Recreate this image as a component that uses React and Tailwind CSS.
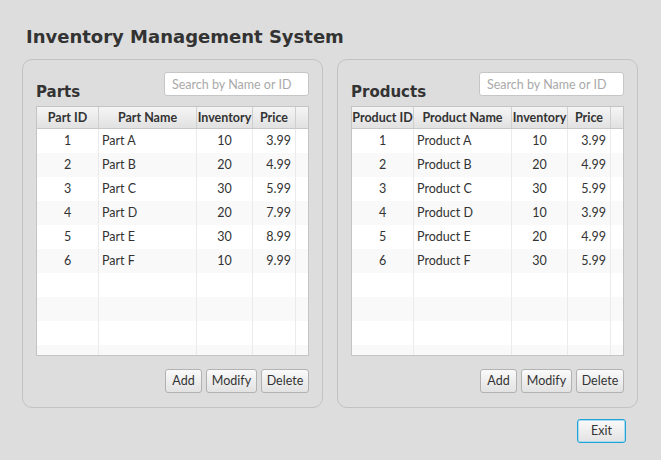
import React from "react";

const PARTS = [
  [1, "Part A", 10, "3.99"],
  [2, "Part B", 20, "4.99"],
  [3, "Part C", 30, "5.99"],
  [4, "Part D", 20, "7.99"],
  [5, "Part E", 30, "8.99"],
  [6, "Part F", 10, "9.99"],
];

const PRODUCTS = [
  [1, "Product A", 10, "3.99"],
  [2, "Product B", 20, "4.99"],
  [3, "Product C", 30, "5.99"],
  [4, "Product D", 10, "3.99"],
  [5, "Product E", 20, "4.99"],
  [6, "Product F", 30, "5.99"],
];

const UI = { fontFamily: 'Lato, "Open Sans", sans-serif' };
const HEAD = { fontFamily: '"DejaVu Sans", Verdana, sans-serif' };

function Btn({ children, w, focused }) {
  return (
    <button
      type="button"
      className={`${w} h-[24px] rounded-[3px] text-[12.5px] leading-none text-[#333] bg-gradient-to-b from-[#fafafa] to-[#e2e2e2] border ${
        focused ? "border-[#1fa3d6] shadow-[inset_0_0_0_1px_#a8dbf0]" : "border-[#b2b2b2]"
      }`}
    >
      {children}
    </button>
  );
}

function Table({ labels, rows }) {
  const cols = ["w-[62px]", "w-[98px]", "w-[56px]", "w-[43px]"];
  const empty = Array.from({ length: 10 - rows.length }, () => null);
  return (
    <div className="h-[250px] border border-[#c4c4c4] bg-white overflow-hidden">
      <div className="flex h-[22px] bg-gradient-to-b from-[#f5f5f5] to-[#e1e1e1] border-b border-[#c8c8c8]">
        {labels.map((l, i) => (
          <div
            key={l}
            className={`${cols[i]} shrink-0 border-r border-[#cfcfcf] flex items-center justify-center pt-[1px] text-[12.5px] font-bold text-[#333] whitespace-nowrap`}
          >
            {l}
          </div>
        ))}
        <div className="flex-1" />
      </div>
      {rows.concat(empty).map((r, i) => (
        <div
          key={i}
          className={`flex h-[24px] text-[12.5px] text-[#333] ${i % 2 ? "bg-[#f9f9f9]" : "bg-white"}`}
        >
          <div className={`${cols[0]} shrink-0 border-r border-[#ebebeb] flex items-center justify-center`}>{r && r[0]}</div>
          <div className={`${cols[1]} shrink-0 border-r border-[#ebebeb] flex items-center pl-[3px]`}>{r && r[1]}</div>
          <div className={`${cols[2]} shrink-0 border-r border-[#ebebeb] flex items-center justify-center`}>{r && r[2]}</div>
          <div className={`${cols[3]} shrink-0 border-r border-[#ebebeb] flex items-center justify-end pr-[4px]`}>{r && r[3]}</div>
          <div className="flex-1" />
        </div>
      ))}
    </div>
  );
}

function Panel({ title, labels, rows }) {
  return (
    <div className="w-[301px] h-[349px] rounded-[10px] border border-[#c2c2c2] px-[13px] pt-[12px] flex flex-col">
      <div className="flex items-end justify-between h-[26px]">
        <span style={HEAD} className="text-[15px] font-bold text-[#333] leading-none mb-[-2px]">
          {title}
        </span>
        <input
          style={UI}
          placeholder="Search by Name or ID"
          className="w-[145px] h-[24px] mb-[2px] rounded-[3px] border border-[#c6c6c6] bg-white px-[7px] text-[12.5px] text-[#333] placeholder:text-[#a9a9a9] outline-none"
        />
      </div>
      <div className="mt-[8px]">
        <Table labels={labels} rows={rows} />
      </div>
      <div className="flex justify-end gap-[4px] mt-[13px]">
        <Btn w="w-[37px]">Add</Btn>
        <Btn w="w-[51px]">Modify</Btn>
        <Btn w="w-[48px]">Delete</Btn>
      </div>
    </div>
  );
}

export default function App() {
  return (
    <div style={UI} className="w-[661px] h-[460px] bg-[#dddddd] pt-[25px] px-[22px] overflow-hidden">
      <h1 style={HEAD} className="ml-[4px] text-[18px] leading-[24px] font-bold text-[#333]">
        Inventory Management System
      </h1>
      <div className="flex gap-[14px] mt-[10px]">
        <Panel title="Parts" labels={["Part ID", "Part Name", "Inventory", "Price"]} rows={PARTS} />
        <Panel title="Products" labels={["Product ID", "Product Name", "Inventory", "Price"]} rows={PRODUCTS} />
      </div>
      <div className="flex justify-end mt-[11px] pr-[13px]">
        <Btn w="w-[49px]" focused>
          Exit
        </Btn>
      </div>
    </div>
  );
}
